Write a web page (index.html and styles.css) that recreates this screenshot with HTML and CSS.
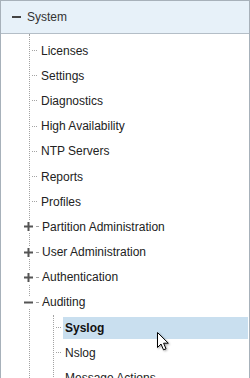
FILE: index.html
```html
<!DOCTYPE html>
<html lang="en">
<head>
  <meta charset="UTF-8">
  <title>System tree</title>
  <link rel="stylesheet" href="styles.css">
</head>
<body>
  <div class="panel">
    <div class="panel-header">
      <span class="collapse-bar"></span>
      <span class="header-title">System</span>
    </div>

    <ul class="tree">
      <li><div class="row"><span class="twig"></span><span class="label">Licenses</span></div></li>
      <li><div class="row"><span class="twig"></span><span class="label">Settings</span></div></li>
      <li><div class="row"><span class="twig"></span><span class="label">Diagnostics</span></div></li>
      <li><div class="row"><span class="twig"></span><span class="label">High Availability</span></div></li>
      <li><div class="row"><span class="twig"></span><span class="label">NTP Servers</span></div></li>
      <li><div class="row"><span class="twig"></span><span class="label">Reports</span></div></li>
      <li><div class="row"><span class="twig"></span><span class="label">Profiles</span></div></li>
      <li>
        <div class="row">
          <span class="toggle">
            <svg width="9" height="9" viewBox="0 0 9 9"><rect x="0" y="3.5" width="9" height="2" fill="#555"/><rect x="3.5" y="0" width="2" height="9" fill="#555"/></svg>
          </span>
          <span class="twig short"></span><span class="label">Partition Administration</span>
        </div>
      </li>
      <li>
        <div class="row">
          <span class="toggle">
            <svg width="9" height="9" viewBox="0 0 9 9"><rect x="0" y="3.5" width="9" height="2" fill="#555"/><rect x="3.5" y="0" width="2" height="9" fill="#555"/></svg>
          </span>
          <span class="twig short"></span><span class="label">User Administration</span>
        </div>
      </li>
      <li>
        <div class="row">
          <span class="toggle">
            <svg width="9" height="9" viewBox="0 0 9 9"><rect x="0" y="3.5" width="9" height="2" fill="#555"/><rect x="3.5" y="0" width="2" height="9" fill="#555"/></svg>
          </span>
          <span class="twig short"></span><span class="label">Authentication</span>
        </div>
      </li>
      <li>
        <div class="row">
          <span class="toggle">
            <svg width="9" height="9" viewBox="0 0 9 9"><rect x="0" y="3.5" width="9" height="2" fill="#555"/></svg>
          </span>
          <span class="twig short"></span><span class="label">Auditing</span>
        </div>
        <ul class="tree sub">
          <li><div class="row"><span class="twig"></span><span class="label selected">Syslog</span></div></li>
          <li><div class="row"><span class="twig"></span><span class="label">Nslog</span></div></li>
          <li><div class="row"><span class="twig"></span><span class="label">Message Actions</span></div></li>
        </ul>
      </li>
      <li><div class="row"><span class="twig"></span><span class="label">SNMP</span></div></li>
    </ul>

    <!-- mouse pointer over the selected node -->
    <svg class="pointer" width="14" height="21" viewBox="0 0 14 21">
      <path d="M1.5 1.5 L1.5 16.5 L5 13 L7.5 18.8 L10 17.8 L7.6 12.2 L12.3 12.2 Z" fill="#fff" stroke="#000" stroke-width="1" stroke-linejoin="miter"/>
    </svg>
  </div>
</body>
</html>
```

FILE: styles.css
```css
body {
  margin: 0;
  background-color: #fff;
  font-family: "Liberation Sans", Arial, sans-serif;
  font-size: 12px;
  color: #222;
}

.panel {
  position: relative;
  width: 250px;
  height: 378px;
  box-sizing: border-box;
  border: 1px solid #a7b1ba;
  border-bottom: none;
  overflow: hidden;
}

.panel-header {
  display: flex;
  align-items: center;
  height: 32px;
  padding-left: 11px;
  background-color: #e7f1f9;
  border-bottom: 1px solid #b4bec7;
}

.collapse-bar {
  width: 9px;
  height: 2px;
  background-color: #444;
}

.header-title {
  margin-left: 6px;
  color: #333;
}

.tree {
  list-style: none;
  margin: 0 0 0 28px;
  padding: 4px 0 0 0;
  border-left: 1px dotted #a3a3a3;
}

.tree.sub {
  margin-left: 23px;
  padding-top: 0;
}

.row {
  display: flex;
  align-items: center;
  height: 25.2px;
}

.twig {
  width: 5px;
  margin-left: 2px;
  border-top: 1px dotted #a3a3a3;
}

.twig.short {
  width: 2px;
  margin-left: 3px;
}

.toggle {
  display: flex;
  align-items: center;
  justify-content: center;
  width: 9px;
  height: 13px;
  margin-left: -6px;
  background-color: #fff;
}

.label {
  margin-left: 4px;
  white-space: nowrap;
}

.sub .label {
  margin-left: 2px;
  padding-left: 2px;
  line-height: 22px;
  flex: 1;
  margin-right: 1px;
}

.label.selected {
  background-color: #c9dfef;
  font-weight: bold;
  color: #111;
}

.pointer {
  position: absolute;
  left: 155px;
  top: 330px;
  filter: drop-shadow(1px 1px 1px rgba(0, 0, 0, 0.35));
}
```
